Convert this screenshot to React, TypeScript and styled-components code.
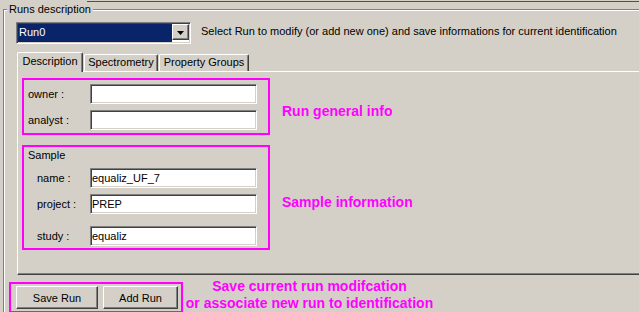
import styled, { createGlobalStyle } from 'styled-components';

const UI = '"Liberation Sans", Arial, sans-serif';
const FACE = '#d4d0c8';
const MAGENTA = '#ff00ff';

const GlobalStyle = createGlobalStyle`
  html, body {
    margin: 0;
    padding: 0;
  }
  body {
    width: 639px;
    height: 312px;
    overflow: hidden;
    background: ${FACE};
    font-family: ${UI};
    font-size: 11px;
    color: #000;
  }
`;

// edge of the pane above, hidden behind the group box title on the left
const TopEdge = styled.div`
  height: 1px;
  margin: 1px 0 0 87px;
  background: #505050;
`;

// the group box runs on past the right and bottom edges of the window,
// so only its left and top edges are drawn
const GroupBox = styled.fieldset`
  margin: 1px 0 0 3px;
  padding: 6px 0 0 0;
  width: 636px;
  height: 309px;
  box-sizing: border-box;
  border: 1px solid #808080;
  border-right: none;
  border-bottom: none;
  box-shadow: inset 1px 1px 0 #fff;
  overflow: hidden;
`;

const Legend = styled.legend`
  margin-left: 3px;
  padding: 0 2px;
  font: 11px/13px ${UI};
  background: ${FACE};
`;

const TopRow = styled.div`
  display: flex;
  align-items: center;
  gap: 10px;
  margin-left: 12px;
  height: 22px;
`;

const Hint = styled.span`
  margin-top: -4px;
  white-space: nowrap;
`;

const Combo = styled.div`
  display: flex;
  width: 175px;
  height: 22px;
  box-sizing: border-box;
  padding: 1px;
  background: #fff;
  border: 1px solid;
  border-color: #808080 #fff #fff #808080;
  box-shadow: inset 1px 1px 0 #404040, inset -1px -1px 0 ${FACE};
`;

const ComboValue = styled.div`
  flex: 1;
  background: #0a246a;
  color: #fff;
  line-height: 16px;
  padding-left: 1px;
`;

const RaisedBox = styled.div`
  box-sizing: border-box;
  background: ${FACE};
  border: 1px solid;
  border-color: #fff #404040 #404040 #fff;
  box-shadow: inset -1px -1px 0 #808080;
`;

const ComboButton = styled(RaisedBox)`
  width: 17px;
  height: 16px;
  display: flex;
  align-items: center;
  justify-content: center;
  padding-top: 1px;
`;

const TabStrip = styled.div`
  display: flex;
  align-items: flex-end;
  margin: 7px 0 0 13px;
  gap: 1px;
  position: relative;
  z-index: 1;
  height: 20px;
`;

const Tab = styled.div<{ $width: number; $active?: boolean }>`
  width: ${(p) => p.$width}px;
  height: ${(p) => (p.$active ? 20 : 17)}px;
  margin-bottom: ${(p) => (p.$active ? -1 : 0)}px;
  box-sizing: border-box;
  background: ${FACE};
  border-top: 1px solid #fff;
  border-left: 1px solid #fff;
  border-right: 1px solid #404040;
  border-radius: 2px 2px 0 0;
  box-shadow: inset -1px 0 0 #808080;
  text-align: center;
  line-height: ${(p) => (p.$active ? 16 : 15)}px;
  white-space: nowrap;
`;

const Panel = styled.div`
  margin-left: 13px;
  height: 204px;
  box-sizing: border-box;
  padding: 6px 0 0 4px;
  border: 1px solid;
  border-color: #fff #404040 #404040 #fff;
  border-right: none;
  box-shadow: inset 0 -1px 0 #808080;
  display: grid;
  grid-template-columns: 248px auto;
  grid-auto-rows: min-content;
  column-gap: 12px;
  row-gap: 10px;
`;

const Frame = styled.div<{ $height: number }>`
  height: ${(p) => p.$height}px;
  box-sizing: border-box;
  border: 2px solid ${MAGENTA};
  padding: 2px 0 0 4px;
  display: flex;
  flex-direction: column;
`;

const FrameTitle = styled.div`
  line-height: 13px;
  margin-bottom: 6px;
`;

const FieldRow = styled.div<{ $space?: number }>`
  display: flex;
  align-items: center;
  height: 20px;
  margin-top: ${(p) => p.$space ?? 0}px;
`;

const Label = styled.div<{ $indent?: number }>`
  width: 62px;
  box-sizing: border-box;
  padding-left: ${(p) => p.$indent ?? 0}px;
  white-space: nowrap;
`;

const TextBox = styled.input`
  width: 167px;
  height: 20px;
  box-sizing: border-box;
  margin: 0;
  padding: 0;
  font: 11px ${UI};
  color: #000;
  background: #fff;
  border: 1px solid;
  border-color: #808080 #fff #fff #808080;
  box-shadow: inset 1px 1px 0 #404040, inset -1px -1px 0 ${FACE};
  outline: none;
  text-indent: 1px;
`;

const Note = styled.div`
  align-self: center;
  margin-top: 10px;
  font: bold 14px/17px ${UI};
  color: ${MAGENTA};
  white-space: nowrap;
`;

const BottomRow = styled.div`
  display: flex;
  align-items: flex-start;
  margin: 7px 0 0 5px;
`;

const ButtonFrame = styled.div`
  display: flex;
  gap: 5px;
  border: 2px solid ${MAGENTA};
  padding: 2px 3px 2px 5px;
`;

const PushButton = styled(RaisedBox)<{ $width: number }>`
  width: ${(p) => p.$width}px;
  height: 23px;
  display: flex;
  align-items: center;
  justify-content: center;
`;

const BottomNote = styled(Note)`
  width: 253px;
  margin-top: -4px;
  text-align: center;
  align-self: flex-start;
`;

const DownArrow = () => (
  <svg width="7" height="4" viewBox="0 0 7 4">
    <polygon points="0,0 7,0 3.5,4" fill="#000" />
  </svg>
);

export default function App() {
  return (
    <>
      <GlobalStyle />
      <TopEdge />
      <GroupBox>
        <Legend>Runs description</Legend>
        <TopRow>
          <Combo>
            <ComboValue>Run0</ComboValue>
            <ComboButton>
              <DownArrow />
            </ComboButton>
          </Combo>
          <Hint>Select Run to modify (or add new one) and save informations for current identification</Hint>
        </TopRow>

        <TabStrip>
          <Tab $width={66} $active>Description</Tab>
          <Tab $width={74}>Spectrometry</Tab>
          <Tab $width={90}>Property Groups</Tab>
        </TabStrip>

        <Panel>
          <Frame $height={57}>
            <FieldRow $space={2}>
              <Label>owner :</Label>
              <TextBox readOnly value="" />
            </FieldRow>
            <FieldRow $space={6}>
              <Label>analyst :</Label>
              <TextBox readOnly value="" />
            </FieldRow>
          </Frame>
          <Note>Run general info</Note>

          <Frame $height={105}>
            <FrameTitle>Sample</FrameTitle>
            <FieldRow>
              <Label $indent={9}>name :</Label>
              <TextBox readOnly value="equaliz_UF_7" />
            </FieldRow>
            <FieldRow $space={6}>
              <Label $indent={9}>project :</Label>
              <TextBox readOnly value="PREP" />
            </FieldRow>
            <FieldRow $space={12}>
              <Label $indent={9}>study :</Label>
              <TextBox readOnly value="equaliz" />
            </FieldRow>
          </Frame>
          <Note>Sample information</Note>
        </Panel>

        <BottomRow>
          <ButtonFrame>
            <PushButton $width={82}>Save Run</PushButton>
            <PushButton $width={75}>Add Run</PushButton>
          </ButtonFrame>
          <BottomNote>
            Save current run modifcation
            <br />
            or associate new run to identification
          </BottomNote>
        </BottomRow>
      </GroupBox>
    </>
  );
}
